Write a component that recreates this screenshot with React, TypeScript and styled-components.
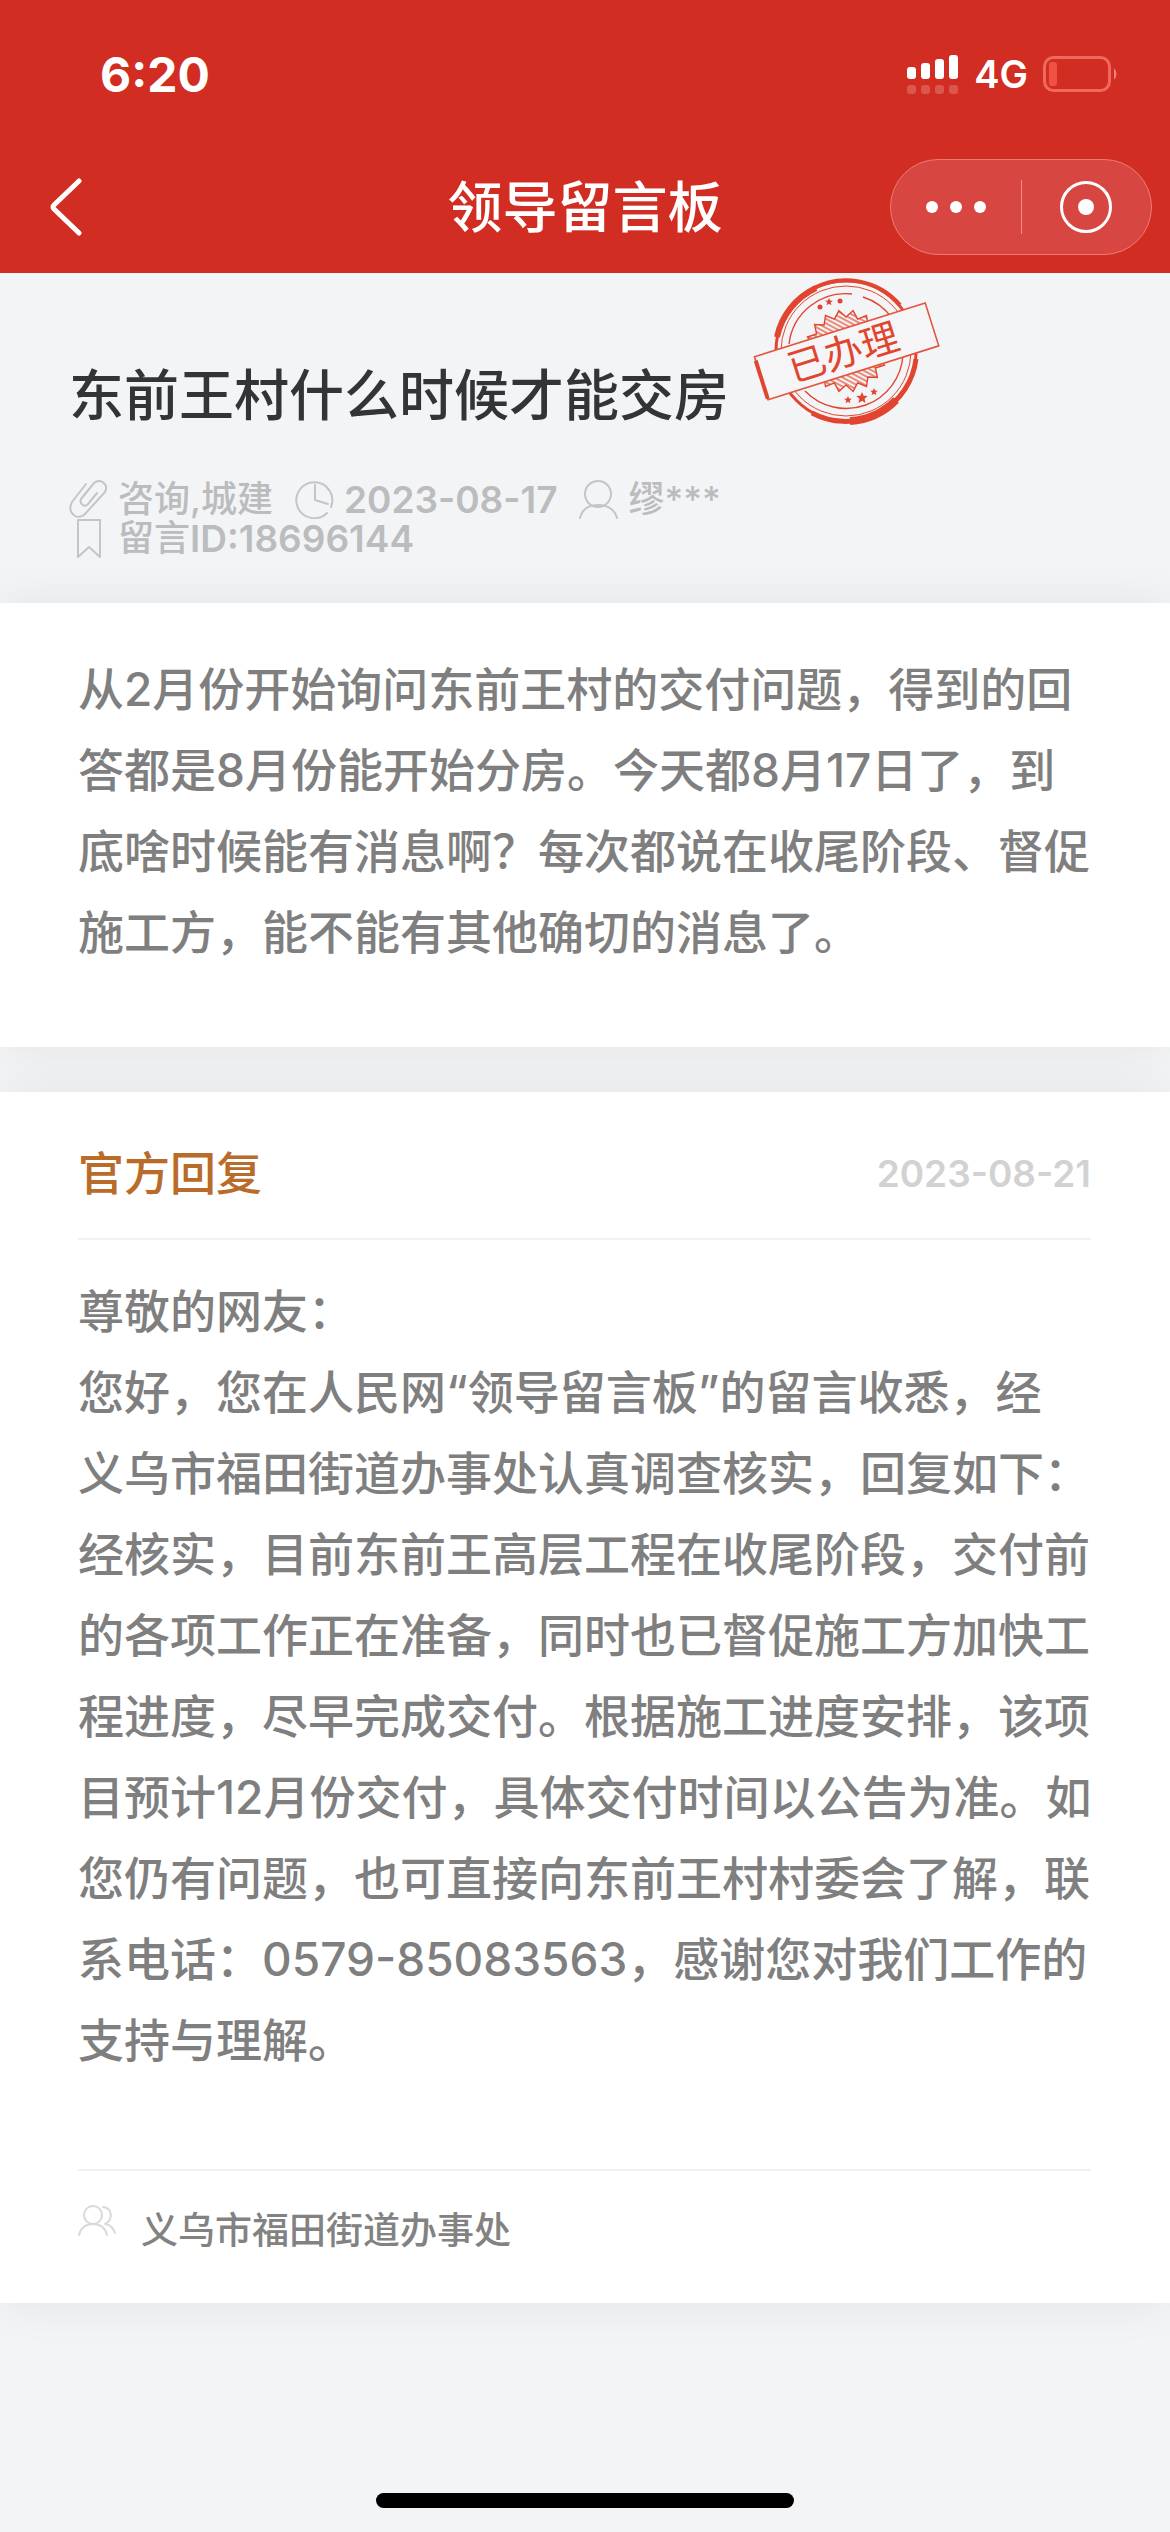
import React from "react";
import styled, { createGlobalStyle } from "styled-components";

const Global = createGlobalStyle`
  * { box-sizing: border-box; }
  html, body, #root { min-height: 100%; }
  body {
    margin: 0;
    background: #f3f4f6;
    font-family: Inter, "Noto Sans CJK SC", sans-serif;
    font-weight: 500;
  }
  h1, h2, p { margin: 0; font-weight: 500; }
  button { border: 0; padding: 0; background: none; color: inherit; font: inherit; }
  svg { display: block; flex: none; }
`;

const Page = styled.div`
  min-height: 100vh;
  display: flex;
  flex-direction: column;
  overflow: hidden;
  background: #f3f4f6;
`;

const Header = styled.header`
  background: #d12d22;
  color: #fff;
`;

const StatusBar = styled.div`
  display: flex;
  align-items: center;
  justify-content: space-between;
  height: 148px;
  padding: 0 50px 0 100px;
`;

const Clock = styled.time`
  font-size: 48px;
  font-weight: 700;
`;

const StatusIcons = styled.div`
  display: flex;
  align-items: center;
  gap: 15px;
  font-size: 38px;
  font-weight: 600;
`;

const NavBar = styled.nav`
  display: grid;
  grid-template-columns: 1fr auto 1fr;
  align-items: center;
  height: 125px;
  padding: 0 18px 8px;
`;

const BackButton = styled.button`
  justify-self: start;
  margin-left: 26px;
  padding: 6px;
`;

const NavTitle = styled.h1`
  font-size: 55px;
  line-height: 80px;
`;

const Capsule = styled.div`
  justify-self: end;
  display: flex;
  align-items: center;
  width: 262px;
  height: 96px;
  border: 1px solid #ee7b72;
  border-radius: 48px;
  background: #d74640;
`;

const CapsuleButton = styled.button`
  flex: 1;
  height: 100%;
  display: flex;
  align-items: center;
  justify-content: center;
`;

const CapsuleDivider = styled.span`
  width: 1px;
  height: 54px;
  background: #f08f88;
`;

const Summary = styled.section`
  height: 330px;
  padding: 82px 69px 0;
  position: relative;
`;

const Title = styled.h2`
  font-size: 55px;
  line-height: 80px;
  color: #333438;
`;

const Stamp = styled.svg`
  position: absolute;
  left: 748px;
  top: 2px;
`;

const MetaList = styled.div`
  display: flex;
  flex-wrap: wrap;
  column-gap: 22px;
  margin-top: 45px;
  font-size: 36px;
  line-height: 39px;
  color: #bbbcbe;
`;

const MetaItem = styled.span<{ $full?: boolean }>`
  display: flex;
  flex-basis: ${(p) => (p.$full ? "100%" : "auto")};

  svg { margin-right: 10px; color: #c4c5c7; }
`;

const Digits = styled.span`
  font-size: 37px;
  font-weight: 600;
`;

const Card = styled.section<{ $bottom: number }>`
  margin-bottom: 45px;
  padding: 46px 72px ${(p) => p.$bottom}px 78px;
  background: #fff;
  box-shadow: 0 0 46px rgba(0, 0, 0, 0.07);
`;

const Body = styled.p`
  font-size: 46px;
  line-height: 81px;
  color: #7f7f7f;
  white-space: pre-line;
`;

const ReplyHead = styled.div`
  display: flex;
  align-items: center;
  justify-content: space-between;
  height: 102px;
  margin: 0 7px 31px 0;
  padding-bottom: 30px;
  border-bottom: 2px solid #f2f2f2;
`;

const ReplyTitle = styled.h2`
  font-size: 46px;
  line-height: 72px;
  color: #b96b2a;
`;

const ReplyDate = styled.time`
  font-size: 37px;
  font-weight: 600;
  color: #d2d2d2;
`;

const ReplyFoot = styled.div`
  display: flex;
  align-items: flex-start;
  gap: 25px;
  margin: 88px 7px 0 0;
  padding-top: 34px;
  border-top: 2px solid #f0f0f0;
  font-size: 37px;
  line-height: 52px;
  color: #828282;
`;

const HomeIndicator = styled.div`
  width: 418px;
  height: 15px;
  margin: auto auto 24px;
  border-radius: 8px;
  background: #000;
`;

const line = { fill: "none", stroke: "currentColor", strokeLinecap: "round", strokeLinejoin: "round" } as const;

const Signal = () => (
  <svg width="52" height="40" viewBox="0 0 52 40" fill="#fff">
    {[12, 16, 20, 24].map((h, i) => (
      <g key={h}>
        <rect x={i * 14} y={25 - h} width="9" height={h} rx="3" />
        <rect x={i * 14} y="31" width="9" height="9" rx="3" opacity="0.2" />
      </g>
    ))}
  </svg>
);

const Battery = () => (
  <svg width="77" height="36" viewBox="0 0 77 36">
    <rect x="1.5" y="1.5" width="65" height="33" rx="9" fill="none" stroke="#f0695f" strokeWidth="3" />
    <rect x="6" y="6" width="8" height="24" rx="3" fill="#ef5143" />
    <path d="M71 12q5 6 0 12z" fill="#ee817a" />
  </svg>
);

const burst = (n: number, outer: number, inner: number) =>
  Array.from({ length: n * 2 }, (_, i) => {
    const r = i % 2 ? inner : outer;
    const a = (i * Math.PI) / n;
    return `${(Math.cos(a) * r).toFixed(1)},${(Math.sin(a) * r).toFixed(1)}`;
  }).join(" ");

const star = (r: number) =>
  Array.from({ length: 10 }, (_, i) => {
    const d = i % 2 ? r * 0.45 : r;
    const a = (i * Math.PI) / 5 - Math.PI / 2;
    return `${(Math.cos(a) * d).toFixed(1)},${(Math.sin(a) * d).toFixed(1)}`;
  }).join(" ");

const HandledStamp = () => (
  <Stamp width="196" height="152" viewBox="-98 -76 196 152" role="img" aria-label="已办理">
    <defs>
      <pattern id="hatch" width="4" height="4" patternUnits="userSpaceOnUse" patternTransform="rotate(28)">
        <path d="M0 1H4" stroke="#e8705c" strokeWidth="1.6" />
      </pattern>
    </defs>
    <g fill="none" stroke="#e2452f">
      <circle r="70" strokeWidth="3" />
      <path d="M-69 -14A70 70 0 0 1 -30 -63" strokeWidth="6" />
      <path d="M-34 -62A71 71 0 0 1 54 -46" strokeWidth="4" />
      <path d="M70 8A71 71 0 0 1 -34 62" strokeWidth="5" />
      <path d="M50 49A70 70 0 0 1 4 70" strokeWidth="8" />
      <circle r="65" strokeWidth="1" />
      <path d="M-57 -7A57 57 0 0 1 6 -57M17 -54A57 57 0 0 1 46 -33M57 4A57 57 0 0 1 -41 40" strokeWidth="1.4" />
      <polygon points={burst(18, 41, 34)} fill="url(#hatch)" strokeWidth="1.4" />
    </g>
    <g fill="#e2452f">
      <circle cx="-26" cy="-44" r="2.5" />
      <polygon points={star(4)} transform="translate(-17 -49)" />
      <circle cx="-6" cy="-50" r="2.5" />
      <polygon points={star(4)} transform="translate(2 49)" />
      <polygon points={star(6)} transform="translate(16 47)" />
      <polygon points={star(4)} transform="translate(28 41)" />
    </g>
    <g transform="rotate(-17.5)">
      <rect x="-89" y="-22" width="179" height="45" fill="#f5f5f7" stroke="#e2563f" strokeWidth="1.6" />
      <path d="M-89 -18V22" stroke="#e2452f" strokeWidth="4" />
      <text x="-3" y="14" textAnchor="middle" fontSize="38" fontWeight="400" fill="#e0452f">
        已办理
      </text>
    </g>
  </Stamp>
);

const message = `从2月份开始询问东前王村的交付问题，得到的回
答都是8月份能开始分房。今天都8月17日了，到
底啥时候能有消息啊？每次都说在收尾阶段、督促
施工方，能不能有其他确切的消息了。`;

const reply = `尊敬的网友：
您好，您在人民网“领导留言板”的留言收悉，经
义乌市福田街道办事处认真调查核实，回复如下：
经核实，目前东前王高层工程在收尾阶段，交付前
的各项工作正在准备，同时也已督促施工方加快工
程进度，尽早完成交付。根据施工进度安排，该项
目预计12月份交付，具体交付时间以公告为准。如
您仍有问题，也可直接向东前王村村委会了解，联
系电话：0579-85083563，感谢您对我们工作的
支持与理解。`;

export default function App() {
  return (
    <Page lang="zh-CN">
      <Global />
      <Header>
        <StatusBar>
          <Clock>6:20</Clock>
          <StatusIcons>
            <Signal />
            <span>4G</span>
            <Battery />
          </StatusIcons>
        </StatusBar>
        <NavBar>
          <BackButton aria-label="返回">
            <svg width="32" height="58" viewBox="0 0 32 58" {...line} strokeWidth="5">
              <path d="M29 3L4 27q-2 2 0 4L29 55" />
            </svg>
          </BackButton>
          <NavTitle>领导留言板</NavTitle>
          <Capsule>
            <CapsuleButton aria-label="更多">
              <svg width="62" height="14" viewBox="0 0 62 14" fill="#fff">
                <circle cx="7" cy="7" r="6" />
                <circle cx="31" cy="7" r="6" />
                <circle cx="55" cy="7" r="6" />
              </svg>
            </CapsuleButton>
            <CapsuleDivider />
            <CapsuleButton aria-label="关闭">
              <svg width="54" height="54" viewBox="0 0 54 54">
                <circle cx="27" cy="27" r="24.5" fill="none" stroke="#fff" strokeWidth="3" />
                <circle cx="27" cy="27" r="8" fill="#fff" />
              </svg>
            </CapsuleButton>
          </Capsule>
        </NavBar>
      </Header>

      <Summary>
        <Title>东前王村什么时候才能交房</Title>
        <HandledStamp />
        <MetaList>
          <MetaItem>
            <svg width="39" height="39" viewBox="0 0 39 39" {...line} strokeWidth="2">
              <path d="M17 4L3 22C-2 31 6 41 15 35L36 12C40 4 31 -2 25 3L12 19C10 24 16 28 19 24L28 13" />
            </svg>
            咨询,城建
          </MetaItem>
          <MetaItem>
            <svg width="39" height="39" viewBox="0 0 39 39" {...line} strokeWidth="2">
              <path d="M32 33A18 18 0 1 1 36 27M20 5V20L33 24" />
            </svg>
            <Digits>2023-08-17</Digits>
          </MetaItem>
          <MetaItem>
            <svg width="39" height="39" viewBox="0 0 39 39" {...line} strokeWidth="2">
              <circle cx="19" cy="14" r="13" />
              <path d="M1 38C3 30 9 25 19 25S36 30 38 38" />
            </svg>
            缪***
          </MetaItem>
          <MetaItem $full>
            <svg width="39" height="39" viewBox="0 0 39 39" {...line} strokeWidth="2">
              <path d="M9 1H31V38L20 28L9 38z" />
            </svg>
            留言<Digits>ID:18696144</Digits>
          </MetaItem>
        </MetaList>
      </Summary>

      <Card $bottom={74}>
        <Body>{message}</Body>
      </Card>

      <Card $bottom={46}>
        <ReplyHead>
          <ReplyTitle>官方回复</ReplyTitle>
          <ReplyDate>2023-08-21</ReplyDate>
        </ReplyHead>
        <Body>{reply}</Body>
        <ReplyFoot>
          <svg width="38" height="32" viewBox="0 0 38 32" {...line} stroke="#d9d9d9" strokeWidth="2">
            <ellipse cx="15" cy="10" rx="9" ry="9" />
            <path d="M1 30C3 22 8 19 15 19s12 3 14 11M25 2c10 1 10 13 2 17 6 1 8 4 10 9" />
          </svg>
          义乌市福田街道办事处
        </ReplyFoot>
      </Card>
      <HomeIndicator />
    </Page>
  );
}
